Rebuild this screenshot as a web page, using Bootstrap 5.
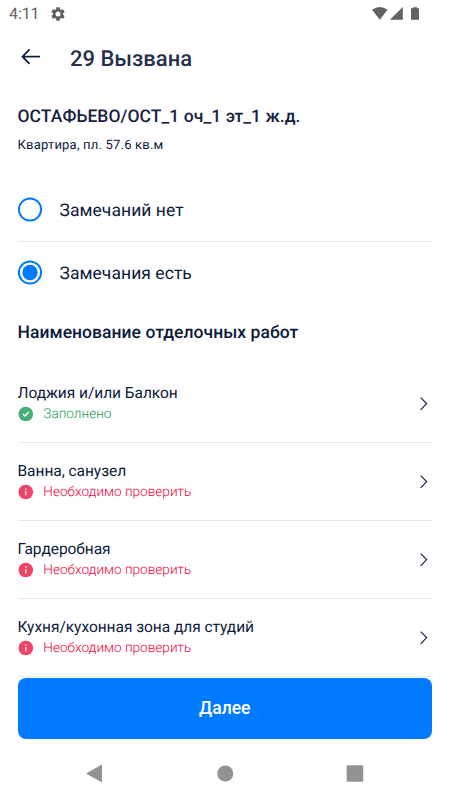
<!DOCTYPE html>
<html lang="ru">
<head>
<meta charset="utf-8">
<meta name="viewport" content="width=device-width, initial-scale=1">
<title>29 Вызвана</title>
<link href="https://cdn.jsdelivr.net/npm/bootstrap@5.3.0/dist/css/bootstrap.min.css" rel="stylesheet">
<style>
  body { font-family: Roboto, "Open Sans", sans-serif; color: #0c1a3c; width: 450px; height: 800px; text-rendering: geometricPrecision; }
  svg { display: block; flex: none; }
  .screen { height: 800px; padding: 0 18px 0 17.5px; }
  .status-bar { height: 27px; margin: 0 -4px 0 -8.5px; color: #5f5f5f; }
  .clock { font-size: 16px; line-height: 20px; letter-spacing: -.1px; width: 42px; }
  .app-bar { height: 62px; }
  .app-title { font-size: 22px; line-height: 28px; font-weight: 500; margin: 3px 0 0 28.5px; color: #25304d; }
  .address { font-size: 17.5px; line-height: 24px; font-weight: 500; margin-top: 16px; color: #17223f; letter-spacing: .05px; }
  .flat { font-size: 13px; line-height: 18px; margin-top: 8px; letter-spacing: .2px; }
  .choices { margin-top: 24px; }
  .choice { height: 62.5px; gap: 17px; font-size: 17.5px; letter-spacing: .05px; cursor: pointer; }
  .choice span { padding-top: 2px; }
  .line { border-bottom: 1.2px solid #e6e7f3; }
  .section-title { font-size: 17.5px; line-height: 24px; font-weight: 500; margin: 17px 0 20px; letter-spacing: .04px; }
  .work { height: 78.1px; }
  .work-name { font-size: 15.5px; line-height: 20px; letter-spacing: -.04px; }
  .work-state { font-size: 13.6px; line-height: 20px; gap: 9px; margin: 1px 0 0 -.2px; font-weight: 300; }
  .done { color: #159a52; }
  .todo { color: #ee0038; }
  .works { height: 313px; overflow: hidden; }
  .btn-next { height: 61px; background: #007bff; border-radius: 8px; font-size: 17.5px; font-weight: 500; color: #fff; }
  .btn-next:hover { background: #0072ec; color: #fff; }
  .sys-nav { height: 60px; padding: 9px 0 0 68px; }
</style>
</head>
<body class="bg-white overflow-hidden">
<svg class="d-none">
  <symbol id="info" viewBox="0 0 16 16">
    <circle cx="8.3" cy="8" r="7.3" fill="#f04465"/>
    <circle cx="8.3" cy="5" r=".85" fill="#fff"/><path d="M8.3 7v4.4" stroke="#fff" stroke-width="1.2"/>
  </symbol>
  <symbol id="check" viewBox="0 0 16 16">
    <circle cx="8.3" cy="8" r="7.3" fill="#46ad77"/>
    <path d="M5.5 8l2 2 3.7-3.9" fill="none" stroke="#fff" stroke-width="1.5"/>
  </symbol>
  <symbol id="chevron" viewBox="0 0 10 16">
    <path d="M1.7 1.6L7.6 7.6l-5.9 6.2" fill="none" stroke="#17213f" stroke-width="1.2"/>
  </symbol>
</svg>
<div class="screen d-flex flex-column">
  <div class="status-bar d-flex align-items-center">
    <span class="clock">4:11</span>
    <svg width="14" height="14" viewBox="2 2 20 20" fill="currentColor"><path d="M19.14 12.94c.04-.3.06-.61.06-.94 0-.32-.02-.64-.07-.94l2.03-1.58a.49.49 0 0 0 .12-.61l-1.92-3.32a.49.49 0 0 0-.59-.22l-2.39.96c-.5-.38-1.03-.7-1.62-.94l-.36-2.54a.48.48 0 0 0-.48-.41h-3.84c-.24 0-.43.17-.47.41l-.36 2.54c-.59.24-1.13.57-1.62.94l-2.39-.96a.48.48 0 0 0-.59.22L2.74 8.87c-.12.21-.08.47.12.61l2.03 1.58c-.05.3-.09.63-.09.94s.02.64.07.94l-2.03 1.58a.49.49 0 0 0-.12.61l1.92 3.32c.12.22.37.29.59.22l2.39-.96c.5.38 1.03.7 1.62.94l.36 2.54c.05.24.24.41.48.41h3.84c.24 0 .44-.17.47-.41l.36-2.54c.59-.24 1.13-.56 1.62-.94l2.39.96c.22.08.47 0 .59-.22l1.92-3.32a.48.48 0 0 0-.12-.61zM12 15.6a3.6 3.6 0 1 1 0-7.2 3.6 3.6 0 0 1 0 7.2z"/></svg>
    <svg class="ms-auto me-3" width="48" height="14" viewBox="0 0 48 14" fill="#626262">
      <path d="M0 2.8Q7.8-2.6 15.6 2.8L7.8 12.7z"/><path d="M30.8 0v12.7H17.8z"/><path d="M39 1.2h2V.2h4v1h2v11.5h-8z"/>
    </svg>
  </div>
  <div class="app-bar d-flex align-items-center">
    <svg width="24" height="24" viewBox="0 0 24 24" fill="none" stroke="#101e46" stroke-width="1.8"><path d="M21.3 10.7H4.7M11 3.9L4.5 10.7l6.5 6.7" stroke-linecap="round"/></svg>
    <span class="app-title">29 Вызвана</span>
  </div>
  <div class="address text-nowrap">ОСТАФЬЕВО/ОСТ_1 оч_1 эт_1 ж.д.</div>
  <div class="flat">Квартира, пл. 57.6 кв.м</div>
  <div class="choices">
    <div class="choice line d-flex align-items-center">
      <svg width="25" height="25"><circle cx="12" cy="12.5" r="11.1" fill="none" stroke="#007bff" stroke-width="2"/></svg>
      <span>Замечаний нет</span>
    </div>
    <div class="choice d-flex align-items-center">
      <svg width="25" height="25"><circle cx="12" cy="12.5" r="11.1" fill="none" stroke="#007bff" stroke-width="2"/><circle cx="12" cy="12.5" r="7.7" fill="#007bff"/></svg>
      <span>Замечания есть</span>
    </div>
  </div>
  <div class="section-title">Наименование отделочных работ</div>
  <div class="works">
    <div class="work line d-flex align-items-center justify-content-between">
      <div><div class="work-name">Лоджия и/или Балкон</div><div class="work-state done d-flex align-items-center"><svg width="17" height="16"><use href="#check"/></svg>Заполнено</div></div>
      <svg width="13" height="16" viewBox="0 0 13 16"><use href="#chevron" width="10" height="16"/></svg>
    </div>
    <div class="work line d-flex align-items-center justify-content-between">
      <div><div class="work-name">Ванна, санузел</div><div class="work-state todo d-flex align-items-center"><svg width="17" height="16"><use href="#info"/></svg>Необходимо проверить</div></div>
      <svg width="13" height="16" viewBox="0 0 13 16"><use href="#chevron" width="10" height="16"/></svg>
    </div>
    <div class="work line d-flex align-items-center justify-content-between">
      <div><div class="work-name">Гардеробная</div><div class="work-state todo d-flex align-items-center"><svg width="17" height="16"><use href="#info"/></svg>Необходимо проверить</div></div>
      <svg width="13" height="16" viewBox="0 0 13 16"><use href="#chevron" width="10" height="16"/></svg>
    </div>
    <div class="work line d-flex align-items-center justify-content-between">
      <div><div class="work-name">Кухня/кухонная зона для студий</div><div class="work-state todo d-flex align-items-center"><svg width="17" height="16"><use href="#info"/></svg>Необходимо проверить</div></div>
      <svg width="13" height="16" viewBox="0 0 13 16"><use href="#chevron" width="10" height="16"/></svg>
    </div>
  </div>
  <button type="button" class="btn btn-next w-100 border-0 flex-shrink-0">Далее</button>
  <div class="sys-nav">
    <svg width="280" height="50" viewBox="0 0 280 50" fill="#929292"><path d="M0 25.5L16 16.5v18z"/><circle cx="139.3" cy="25.5" r="8"/><rect x="260.7" y="17.3" width="16.5" height="16.5" rx="1"/></svg>
  </div>
</div>
<script src="https://cdn.jsdelivr.net/npm/bootstrap@5.3.0/dist/js/bootstrap.bundle.min.js"></script>
</body>
</html>
